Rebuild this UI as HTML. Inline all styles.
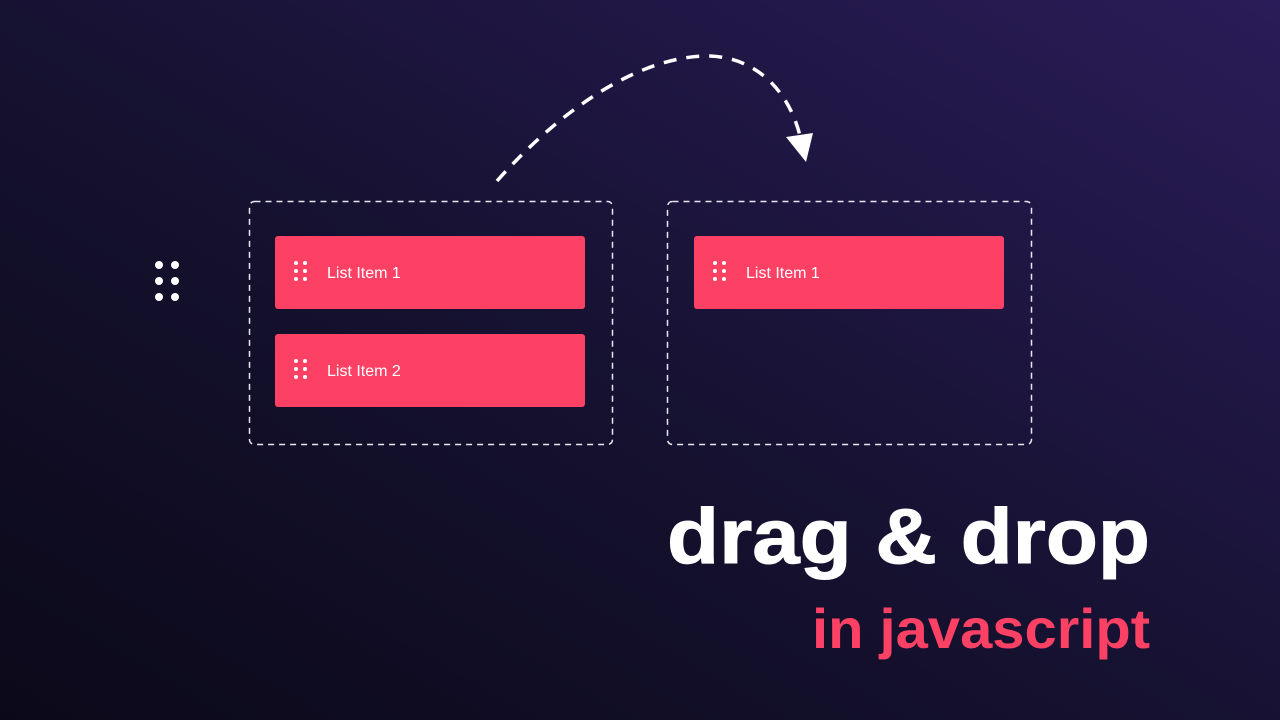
<!DOCTYPE html>
<html><head><style>
html,body{margin:0;padding:0}
body{width:1280px;height:720px;overflow:hidden;background:linear-gradient(30deg,#0b0919 0%,#15112f 45%,#2a1c58 100%);position:relative;font-family:"Liberation Sans",sans-serif}
.item{position:absolute;background:#fd4165;border-radius:3px;color:#fff;font-size:16px;height:73px;display:flex;align-items:center}
.item span{margin-left:52px;margin-top:2px}
.dots{position:absolute;display:grid;grid-template-columns:repeat(2,auto)}
.dots i{display:block;border-radius:50%;background:#fff}
</style></head><body>
<svg width="1280" height="720" style="position:absolute;left:0;top:0">
<rect x="249.5" y="201.5" width="363" height="243" rx="5" fill="none" stroke="#e8e6f0" stroke-width="1.5" stroke-dasharray="6 5"/>
<rect x="667.5" y="201.5" width="364" height="243" rx="5" fill="none" stroke="#e8e6f0" stroke-width="1.5" stroke-dasharray="6 5"/>
<path d="M497 181 C560 110 640 55 710 56 C760 58 790 95 800 136" fill="none" stroke="#fff" stroke-width="3.5" stroke-dasharray="13 10"/>
<polygon points="786,137 813,133 806,162" fill="#fff"/>
<text x="667" y="563" font-family="Liberation Sans" font-weight="bold" font-size="78" fill="#fff" stroke="#fff" stroke-width="1" textLength="483" lengthAdjust="spacingAndGlyphs">drag &amp; drop</text>
<text x="812" y="648" font-family="Liberation Sans" font-weight="bold" font-size="56" fill="#fd4165" textLength="338" lengthAdjust="spacingAndGlyphs">in javascript</text>
</svg>
<div class="item" style="left:275px;top:236px;width:310px"><span>List Item 1</span></div>
<div class="item" style="left:275px;top:334px;width:310px"><span>List Item 2</span></div>
<div class="item" style="left:694px;top:236px;width:310px"><span>List Item 1</span></div>
<div class="dots" style="left:294px;top:261px;gap:4px 5px"><i style="width:4px;height:4px"></i><i style="width:4px;height:4px"></i><i style="width:4px;height:4px"></i><i style="width:4px;height:4px"></i><i style="width:4px;height:4px"></i><i style="width:4px;height:4px"></i></div>
<div class="dots" style="left:294px;top:359px;gap:4px 5px"><i style="width:4px;height:4px"></i><i style="width:4px;height:4px"></i><i style="width:4px;height:4px"></i><i style="width:4px;height:4px"></i><i style="width:4px;height:4px"></i><i style="width:4px;height:4px"></i></div>
<div class="dots" style="left:713px;top:261px;gap:4px 5px"><i style="width:4px;height:4px"></i><i style="width:4px;height:4px"></i><i style="width:4px;height:4px"></i><i style="width:4px;height:4px"></i><i style="width:4px;height:4px"></i><i style="width:4px;height:4px"></i></div>
<div class="dots" style="left:155px;top:261px;gap:8px 8px"><i style="width:8px;height:8px"></i><i style="width:8px;height:8px"></i><i style="width:8px;height:8px"></i><i style="width:8px;height:8px"></i><i style="width:8px;height:8px"></i><i style="width:8px;height:8px"></i></div>
</body></html>
